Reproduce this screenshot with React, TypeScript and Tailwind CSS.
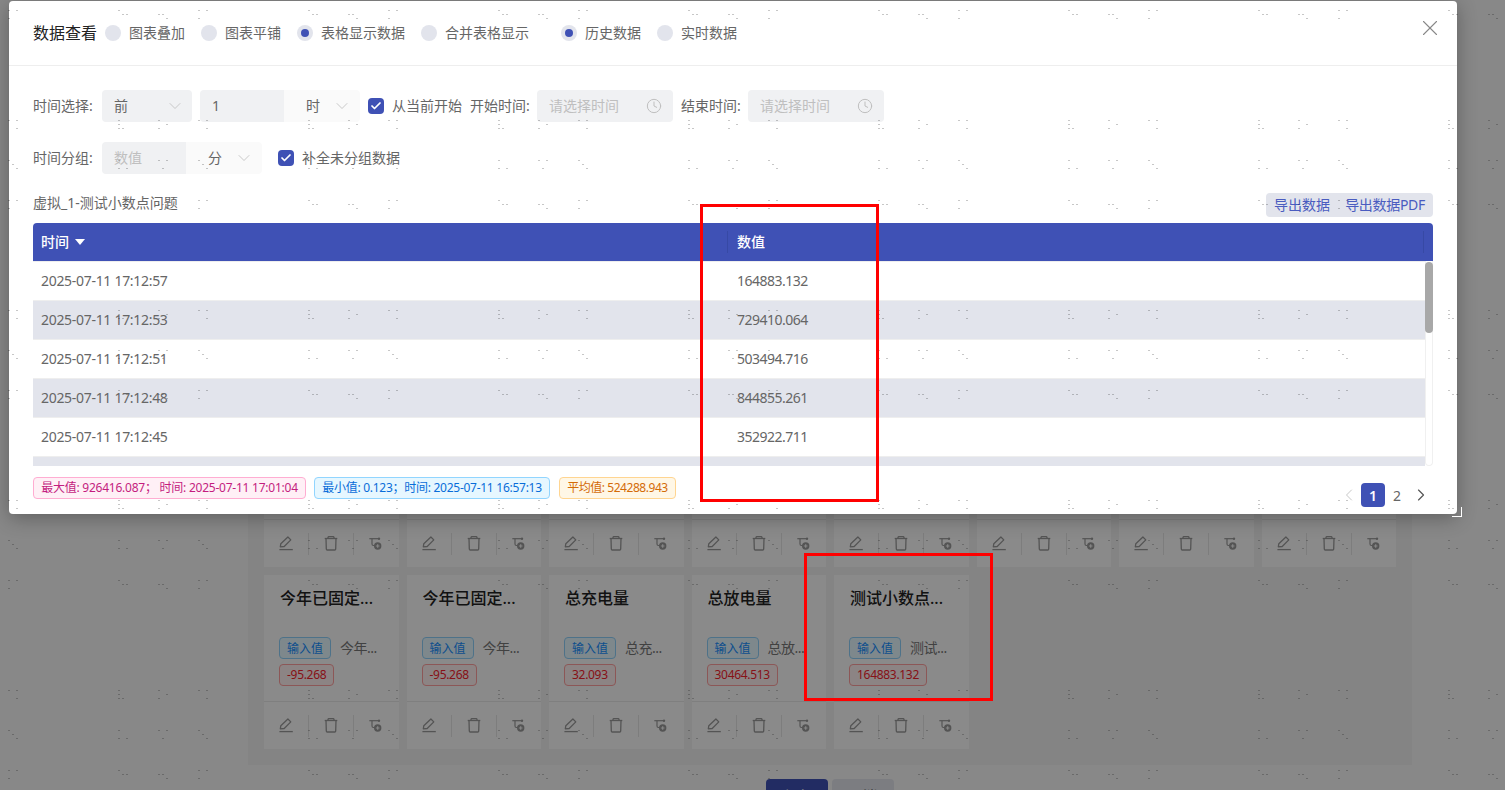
import { Check, ChevronDown, ChevronLeft, ChevronRight, Clock, X } from "lucide-react";

const times = [
  ["2025-07-11 17:12:57", "164883.132"],
  ["2025-07-11 17:12:53", "729410.064"],
  ["2025-07-11 17:12:51", "503494.716"],
  ["2025-07-11 17:12:48", "844855.261"],
  ["2025-07-11 17:12:45", "352922.711"],
];

const cards = [
  { title: "今年已固定...", name: "今年...", value: "-95.268" },
  { title: "今年已固定...", name: "今年...", value: "-95.268" },
  { title: "总充电量", name: "总充...", value: "32.093" },
  { title: "总放电量", name: "总放...", value: "30464.513" },
  { title: "测试小数点...", name: "测试...", value: "164883.132" },
];

// dots of the page watermark, one 190x190 tile
const dots = [
  [8, 160], [12, 164], [16, 168], [118, 160], [118, 168], [126, 168], [158, 160], [166, 160], [162, 168],
  [8, 10], [16, 10], [8, 18], [118, 10], [122, 14], [126, 14], [158, 14], [162, 14], [166, 18],
  [8, 120], [16, 120], [16, 128], [118, 120], [118, 124], [118, 128], [122, 128], [158, 120], [166, 124], [158, 128],
];

function Watermark() {
  return (
    <svg className="absolute inset-0 pointer-events-none" width="1505" height="790">
      <defs>
        <pattern id="wm" width="190" height="190" patternUnits="userSpaceOnUse">
          {dots.map(([x, y], i) => (
            <rect key={i} x={x} y={y} width="2" height="1" fill="#000" fillOpacity="0.22" shapeRendering="crispEdges" />
          ))}
        </pattern>
      </defs>
      <rect width="1505" height="790" fill="url(#wm)" />
    </svg>
  );
}

function EditIcon() {
  return (
    <svg width="16" height="16" viewBox="0 0 16 16" fill="none" stroke="currentColor" strokeWidth="1.3">
      <path d="M2.3 10.8l.5-3L9.9 1l2.9 2.9-6.6 6.6z" strokeLinejoin="round" />
      <path d="M1.4 13.6h13.4" />
    </svg>
  );
}

function TrashIcon() {
  return (
    <svg width="16" height="16" viewBox="0 0 16 16" fill="none" stroke="currentColor" strokeWidth="1.3">
      <path d="M1.7 2.5h12.6" />
      <path d="M5 2.5V1.6a1 1 0 0 1 1-1h4a1 1 0 0 1 1 1v.9" />
      <path d="M3 2.5l.3 10.5a1 1 0 0 0 1 1h7.4a1 1 0 0 0 1-1l.3-10.5" />
    </svg>
  );
}

function FlowPlusIcon() {
  return (
    <svg width="16" height="16" viewBox="0 0 16 16" fill="none" stroke="currentColor" strokeWidth="1.2">
      <path d="M1.3 2.7h9.2" />
      <circle cx="11" cy="2.7" r="1.2" fill="currentColor" stroke="none" />
      <path d="M4 2.7v5.3a1.5 1.5 0 0 0 1.5 1.5h1" />
      <circle cx="9.7" cy="10" r="3.7" fill="currentColor" stroke="none" />
      <path d="M7.9 10h3.6M9.7 8.2v3.6" stroke="#f5f5f5" />
    </svg>
  );
}

function Card({ title, name, value }: { title?: string; name?: string; value?: string }) {
  return (
    <div className="h-[174px] flex flex-col bg-[#fcfcfc]">
      <div className="h-[126px] px-[15px] pt-[13px]">
        {title && (
          <>
            <div className="h-[20px] leading-[20px] text-[16px] font-medium text-[#222] pl-px">{title}</div>
            <div className="mt-[29px] flex items-center gap-[9px]">
              <span className="h-[22px] w-[52px] pt-px flex items-center justify-center rounded border border-[#8fd0fa] bg-[#e6f7ff] text-[12px] text-[#1890ff]">
                输入值
              </span>
              <span className="pb-px text-[14px] tracking-[-0.5px] text-[#777]">{name}</span>
            </div>
            <span className="mt-[5px] h-[22px] px-[7px] inline-flex items-center rounded border border-[#ff9e9e] bg-[#fff1f0] text-[12px] tracking-[-0.3px] text-[#f5222d]">
              {value}
            </span>
          </>
        )}
      </div>
      <div className="h-[48px] border-t border-[#e8e8e8] flex items-center text-[#999]">
        <div className="flex-1 h-[22px] flex items-center justify-center border-r border-[#e4e4e4]">
          <EditIcon />
        </div>
        <div className="flex-1 h-[22px] flex items-center justify-center border-r border-[#e4e4e4]">
          <TrashIcon />
        </div>
        <div className="flex-1 h-[22px] flex items-center justify-center">
          <FlowPlusIcon />
        </div>
      </div>
    </div>
  );
}

function Radio({ label, checked }: { label: string; checked?: boolean }) {
  return (
    <div className="flex items-center gap-2 text-[14px] text-[#666]">
      <span className="w-4 h-4 rounded-full bg-[#e2e4ec] flex items-center justify-center">
        {checked && <span className="w-2 h-2 rounded-full bg-[#3f51b5]" />}
      </span>
      <span className="pb-[2px]">{label}</span>
    </div>
  );
}

function CheckBox({ label }: { label: string }) {
  return (
    <div className="flex items-center gap-2 text-[14px] text-[#666]">
      <span className="w-4 h-4 rounded-sm bg-[#3f51b5] flex items-center justify-center">
        <Check size={12} strokeWidth={3.5} className="text-white" />
      </span>
      <span className="pb-[2px]">{label}</span>
    </div>
  );
}

function UnitSelect({ unit }: { unit: string }) {
  return (
    <div className="w-[76px] h-8 bg-[#fafafa] rounded-r flex items-center pl-[22px] text-[14px] text-[#666]">
      <span className="pb-[2px]">{unit}</span>
      <ChevronDown size={20} strokeWidth={1} className="ml-3 text-[#bfbfbf]" />
    </div>
  );
}

function TimeInput() {
  return (
    <div className="w-[136px] h-8 bg-[#f0f1f3] rounded flex items-center justify-between pl-3 pr-[11px] text-[14px] text-[#bfbfbf]">
      <span className="pb-[2px]">请选择时间</span>
      <Clock size={16} strokeWidth={1.5} />
    </div>
  );
}

export default function App() {
  return (
    <div
      className="relative w-[1505px] h-[790px] overflow-hidden bg-[#f7f7f7]"
      style={{ fontFamily: '"Noto Sans", "Noto Sans CJK SC", sans-serif' }}
    >
      {/* page behind the dialog */}
      <div className="pl-[248px] pt-[377px]">
        <div className="w-[1164px] p-4 bg-[#f0f0f0]">
          <div className="grid grid-cols-8 gap-2">
            {Array.from({ length: 8 }, (_, i) => (
              <Card key={i} />
            ))}
            {cards.map((c, i) => (
              <Card key={i} {...c} />
            ))}
          </div>
        </div>
        <div className="w-[1164px] mt-[14px] flex justify-center gap-1">
          <button className="w-[62px] h-8 rounded bg-[#3f51b5] text-white text-[14px]">保存</button>
          <button className="w-[62px] h-8 rounded bg-[#e2e4ec] text-[#666] text-[14px]">取消</button>
        </div>
      </div>

      {/* mask */}
      <div className="absolute inset-0 bg-black/45" />

      {/* dialog */}
      <div className="absolute left-[9px] top-px w-[1448px] h-[513px] bg-white rounded shadow-[0_4px_20px_rgba(0,0,0,0.3)] flex flex-col">
        <div className="h-[65px] shrink-0 border-b border-[#eeeeee] flex items-center pl-6 pr-[14px]">
          <span className="text-[16px] text-[#222] mr-2">数据查看</span>
          <div className="flex items-center gap-4">
            <Radio label="图表叠加" />
            <Radio label="图表平铺" />
            <Radio label="表格显示数据" checked />
            <Radio label="合并表格显示" />
          </div>
          <div className="flex items-center gap-4 ml-8">
            <Radio label="历史数据" checked />
            <Radio label="实时数据" />
          </div>
          <X size={26} strokeWidth={1} className="ml-auto mb-[10px] text-[#888]" />
        </div>

        <div className="px-6 pt-6">
          <div className="h-8 flex items-center text-[14px] text-[#666]">
            <span className="w-[69px] pb-[2px]">时间选择:</span>
            <div className="w-[90px] h-8 bg-[#f0f1f3] rounded flex items-center justify-between pl-3 pr-[7px]">
              <span className="pb-[2px]">前</span>
              <ChevronDown size={20} strokeWidth={1} className="text-[#bfbfbf]" />
            </div>
            <div className="ml-2 flex">
              <div className="w-[84px] h-8 bg-[#f0f1f3] rounded-l flex items-center pl-3">
                <span className="pb-[2px]">1</span>
              </div>
              <UnitSelect unit="时" />
            </div>
            <div className="ml-2">
              <CheckBox label="从当前开始" />
            </div>
            <span className="ml-2 w-[67px] pb-[2px]">开始时间:</span>
            <TimeInput />
            <span className="ml-[8px] w-[67px] pb-[2px]">结束时间:</span>
            <TimeInput />
          </div>

          <div className="mt-5 h-8 flex items-center text-[14px] text-[#666]">
            <span className="w-[69px] pb-[2px]">时间分组:</span>
            <div className="w-[84px] h-8 bg-[#f0f1f3] rounded-l flex items-center pl-3 text-[#bfbfbf]">
              <span className="pb-[2px]">数值</span>
            </div>
            <UnitSelect unit="分" />
            <div className="ml-4">
              <CheckBox label="补全未分组数据" />
            </div>
          </div>

          <div className="mt-[19px] h-6 flex items-center justify-between text-[14px]">
            <span className="pb-[6px] text-[#666]">虚拟_1-测试小数点问题</span>
            <div className="h-6 w-[167px] px-2 bg-[#e2e4ec] rounded flex items-center justify-between text-[#4a5cc0]">
              <span className="pb-[2px]">导出数据</span>
              <span className="pb-[2px] tracking-[-0.3px]">导出数据PDF</span>
            </div>
          </div>

          <div className="mt-[6px]">
            <div className="h-[38px] bg-[#3f51b5] rounded-t flex items-center text-[14px] font-medium text-white">
              <div className="w-[695px] pl-2 flex items-center gap-[6px] border-r border-[#3749a5] h-[22px]">
                <span className="pb-[2px]">时间</span>
                <svg width="10" height="6" viewBox="0 0 10 6">
                  <path d="M0 0h10L5 6z" fill="#fff" />
                </svg>
              </div>
              <div className="flex-1 pl-[9px] mr-[9px] h-[22px] flex items-center border-r border-[#3749a5]">
                <span className="pb-[2px]">数值</span>
              </div>
            </div>
            <div className="h-[205px] flex overflow-hidden">
              <div className="flex-1 text-[14px] text-[#666]">
                {times.map(([t, v], i) => (
                  <div
                    key={t}
                    className={
                      i % 2 === 1
                        ? "h-[39px] pb-[2px] flex items-center bg-[#e2e4ec] border-t border-[#eeeeee]"
                        : "h-[39px] pb-[2px] flex items-center bg-white border-t border-[#eeeeee]"
                    }
                  >
                    <div className="w-[695px] pl-2 tracking-[-0.3px]">{t}</div>
                    <div className="pl-[9px] tracking-[-0.5px]">{v}</div>
                  </div>
                ))}
                <div className="h-[39px] bg-[#e2e4ec] border-t border-[#eeeeee]" />
              </div>
              <div className="w-2 border border-t-0 border-[#f0f0f0] rounded-b relative">
                <div className="absolute -left-px top-px w-2 h-[71px] rounded bg-[#a8a8a8]" />
              </div>
            </div>
          </div>

          <div className="mt-[11px] flex items-start justify-between">
            <div className="flex text-[12px]">
              <span className="h-[22px] w-[273px] flex items-center justify-center rounded border border-[#ffadd2] bg-[#fff0f6] text-[#c41d7f] tracking-[-0.24px] whitespace-pre">
                最大值: 926416.087； 时间: 2025-07-11 17:01:04
              </span>
              <span className="ml-2 h-[22px] w-[236px] flex items-center justify-center rounded border border-[#91d5ff] bg-[#e6f7ff] text-[#096dd9] tracking-[-0.27px]">
                最小值: 0.123；时间: 2025-07-11 16:57:13
              </span>
              <span className="ml-[9px] h-[22px] w-[117px] flex items-center justify-center rounded border border-[#ffd591] bg-[#fff7e6] text-[#d46b08] tracking-[-0.45px]">
                平均值: 524288.943
              </span>
            </div>
            <div className="mt-[6px] mr-[2px] flex items-center text-[14px] text-[#666]">
              <ChevronLeft size={20} strokeWidth={1.2} className="text-[#c8c8c8] mr-[2px]" />
              <span className="w-6 h-6 rounded bg-[#3f51b5] text-white font-semibold flex items-center justify-center">1</span>
              <span className="w-6 h-6 flex items-center justify-center">2</span>
              <ChevronRight size={20} strokeWidth={1.4} className="ml-[2px] text-[#555]" />
            </div>
          </div>
        </div>
      </div>

      {/* resize corner of the dialog */}
      <div className="absolute left-[1452px] top-[507px] w-[10px] h-[10px] border-r border-b border-white" />

      <Watermark />

      {/* red marks drawn on the screenshot */}
      <div className="absolute left-[700px] top-[204px] w-[179px] h-[298px] border-[3px] border-[#ff0000]" />
      <div className="absolute left-[804px] top-[553px] w-[189px] h-[148px] border-[3px] border-[#ff0000]" />
    </div>
  );
}
